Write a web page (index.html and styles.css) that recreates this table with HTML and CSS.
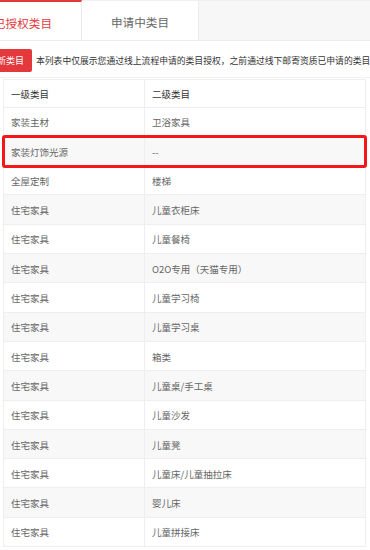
FILE: index.html
```html
<!DOCTYPE html>
<html lang="zh">
<head>
<meta charset="utf-8">
<link rel="stylesheet" href="styles.css">
</head>
<body>
<div class="tabs">
  <div class="tab active">已授权类目</div>
  <div class="tab">申请中类目</div>
</div>
<div class="toolbar">
  <div class="btn">新类目</div>
  <div class="notice">本列表中仅展示您通过线上流程申请的类目授权，之前通过线下邮寄资质已申请的类目</div>
</div>
<div class="grid">
  <div class="row head"><div class="c1">一级类目</div><div class="c2">二级类目</div></div>
  <div class="row"><div class="c1">家装主材</div><div class="c2">卫浴家具</div></div>
  <div class="row alt mark"><div class="c1">家装灯饰光源</div><div class="c2">--</div></div>
  <div class="row"><div class="c1">全屋定制</div><div class="c2">楼梯</div></div>
  <div class="row alt"><div class="c1">住宅家具</div><div class="c2">儿童衣柜床</div></div>
  <div class="row"><div class="c1">住宅家具</div><div class="c2">儿童餐椅</div></div>
  <div class="row alt"><div class="c1">住宅家具</div><div class="c2">O2O专用（天猫专用）</div></div>
  <div class="row"><div class="c1">住宅家具</div><div class="c2">儿童学习椅</div></div>
  <div class="row alt"><div class="c1">住宅家具</div><div class="c2">儿童学习桌</div></div>
  <div class="row"><div class="c1">住宅家具</div><div class="c2">箱类</div></div>
  <div class="row alt"><div class="c1">住宅家具</div><div class="c2">儿童桌/手工桌</div></div>
  <div class="row"><div class="c1">住宅家具</div><div class="c2">儿童沙发</div></div>
  <div class="row alt"><div class="c1">住宅家具</div><div class="c2">儿童凳</div></div>
  <div class="row"><div class="c1">住宅家具</div><div class="c2">儿童床/儿童抽拉床</div></div>
  <div class="row alt"><div class="c1">住宅家具</div><div class="c2">婴儿床</div></div>
  <div class="row"><div class="c1">住宅家具</div><div class="c2">儿童拼接床</div></div>
</div>
</body>
</html>
```

FILE: styles.css
```css
html, body {
  margin: 0;
  padding: 0;
  background: #fff;
}
body {
  width: 370px;
  height: 550px;
  overflow: hidden;
  font-family: "Noto Sans CJK SC", "Noto Sans", sans-serif;
}
.tabs {
  display: flex;
  height: 41px;
  box-sizing: border-box;
  background: #f7f7f7;
  border-top: 1px solid #f0f0f0;
  border-bottom: 1px solid #ececec;
}
.tab {
  flex: 0 0 117px;
  box-sizing: border-box;
  display: flex;
  align-items: center;
  justify-content: center;
  padding-top: 3px;
  background: #fff;
  border-right: 1px solid #ececec;
  font-size: 11.6px;
  color: #666;
}
.tab.active {
  margin-left: -35px;
  margin-top: -1px;
  border-top: 2px solid #e4393c;
  color: #e4393c;
}
.toolbar {
  display: flex;
  align-items: center;
  gap: 4px;
  height: 37px;
  box-sizing: border-box;
  border-bottom: 1px solid #f0f0f0;
  white-space: nowrap;
  padding-top: 2px;
}
.btn {
  flex: none;
  height: 23px;
  display: flex;
  align-items: center;
  margin-left: -3px;
  padding: 0 8px 0 0;
  background: #e3383c;
  border-radius: 2px;
  color: #fff;
  font-size: 9px;
}
.notice {
  font-size: 8.8px;
  color: #333;
}
.grid {
  margin: 1px 4px 0 3px;
  border-left: 1px solid #eee;
  border-right: 1px solid #eee;
}
.row {
  display: flex;
  height: 29.3px;
  box-sizing: border-box;
  border-bottom: 1px solid #eee;
  align-items: stretch;
  font-size: 9.5px;
  color: #666;
  background: #fff;
}
.row.head {
  height: 28.6px;
  border-top: 1px solid #eee;
  color: #333;
}
.row.alt {
  background: #f8f8f8;
}
.c1, .c2 {
  display: flex;
  align-items: center;
  box-sizing: border-box;
  padding-top: 1px;
}
.c1 {
  flex: 0 0 141px;
  padding-left: 7px;
  border-right: 1px solid #eee;
}
.c2 {
  flex: 1;
  padding-left: 7px;
}
.row.mark {
  position: relative;
}
.row.mark::after {
  content: "";
  position: absolute;
  top: -2px;
  left: -2px;
  right: -2px;
  bottom: -3px;
  border: 3px solid #f5161b;
  border-radius: 3px;
}
```
